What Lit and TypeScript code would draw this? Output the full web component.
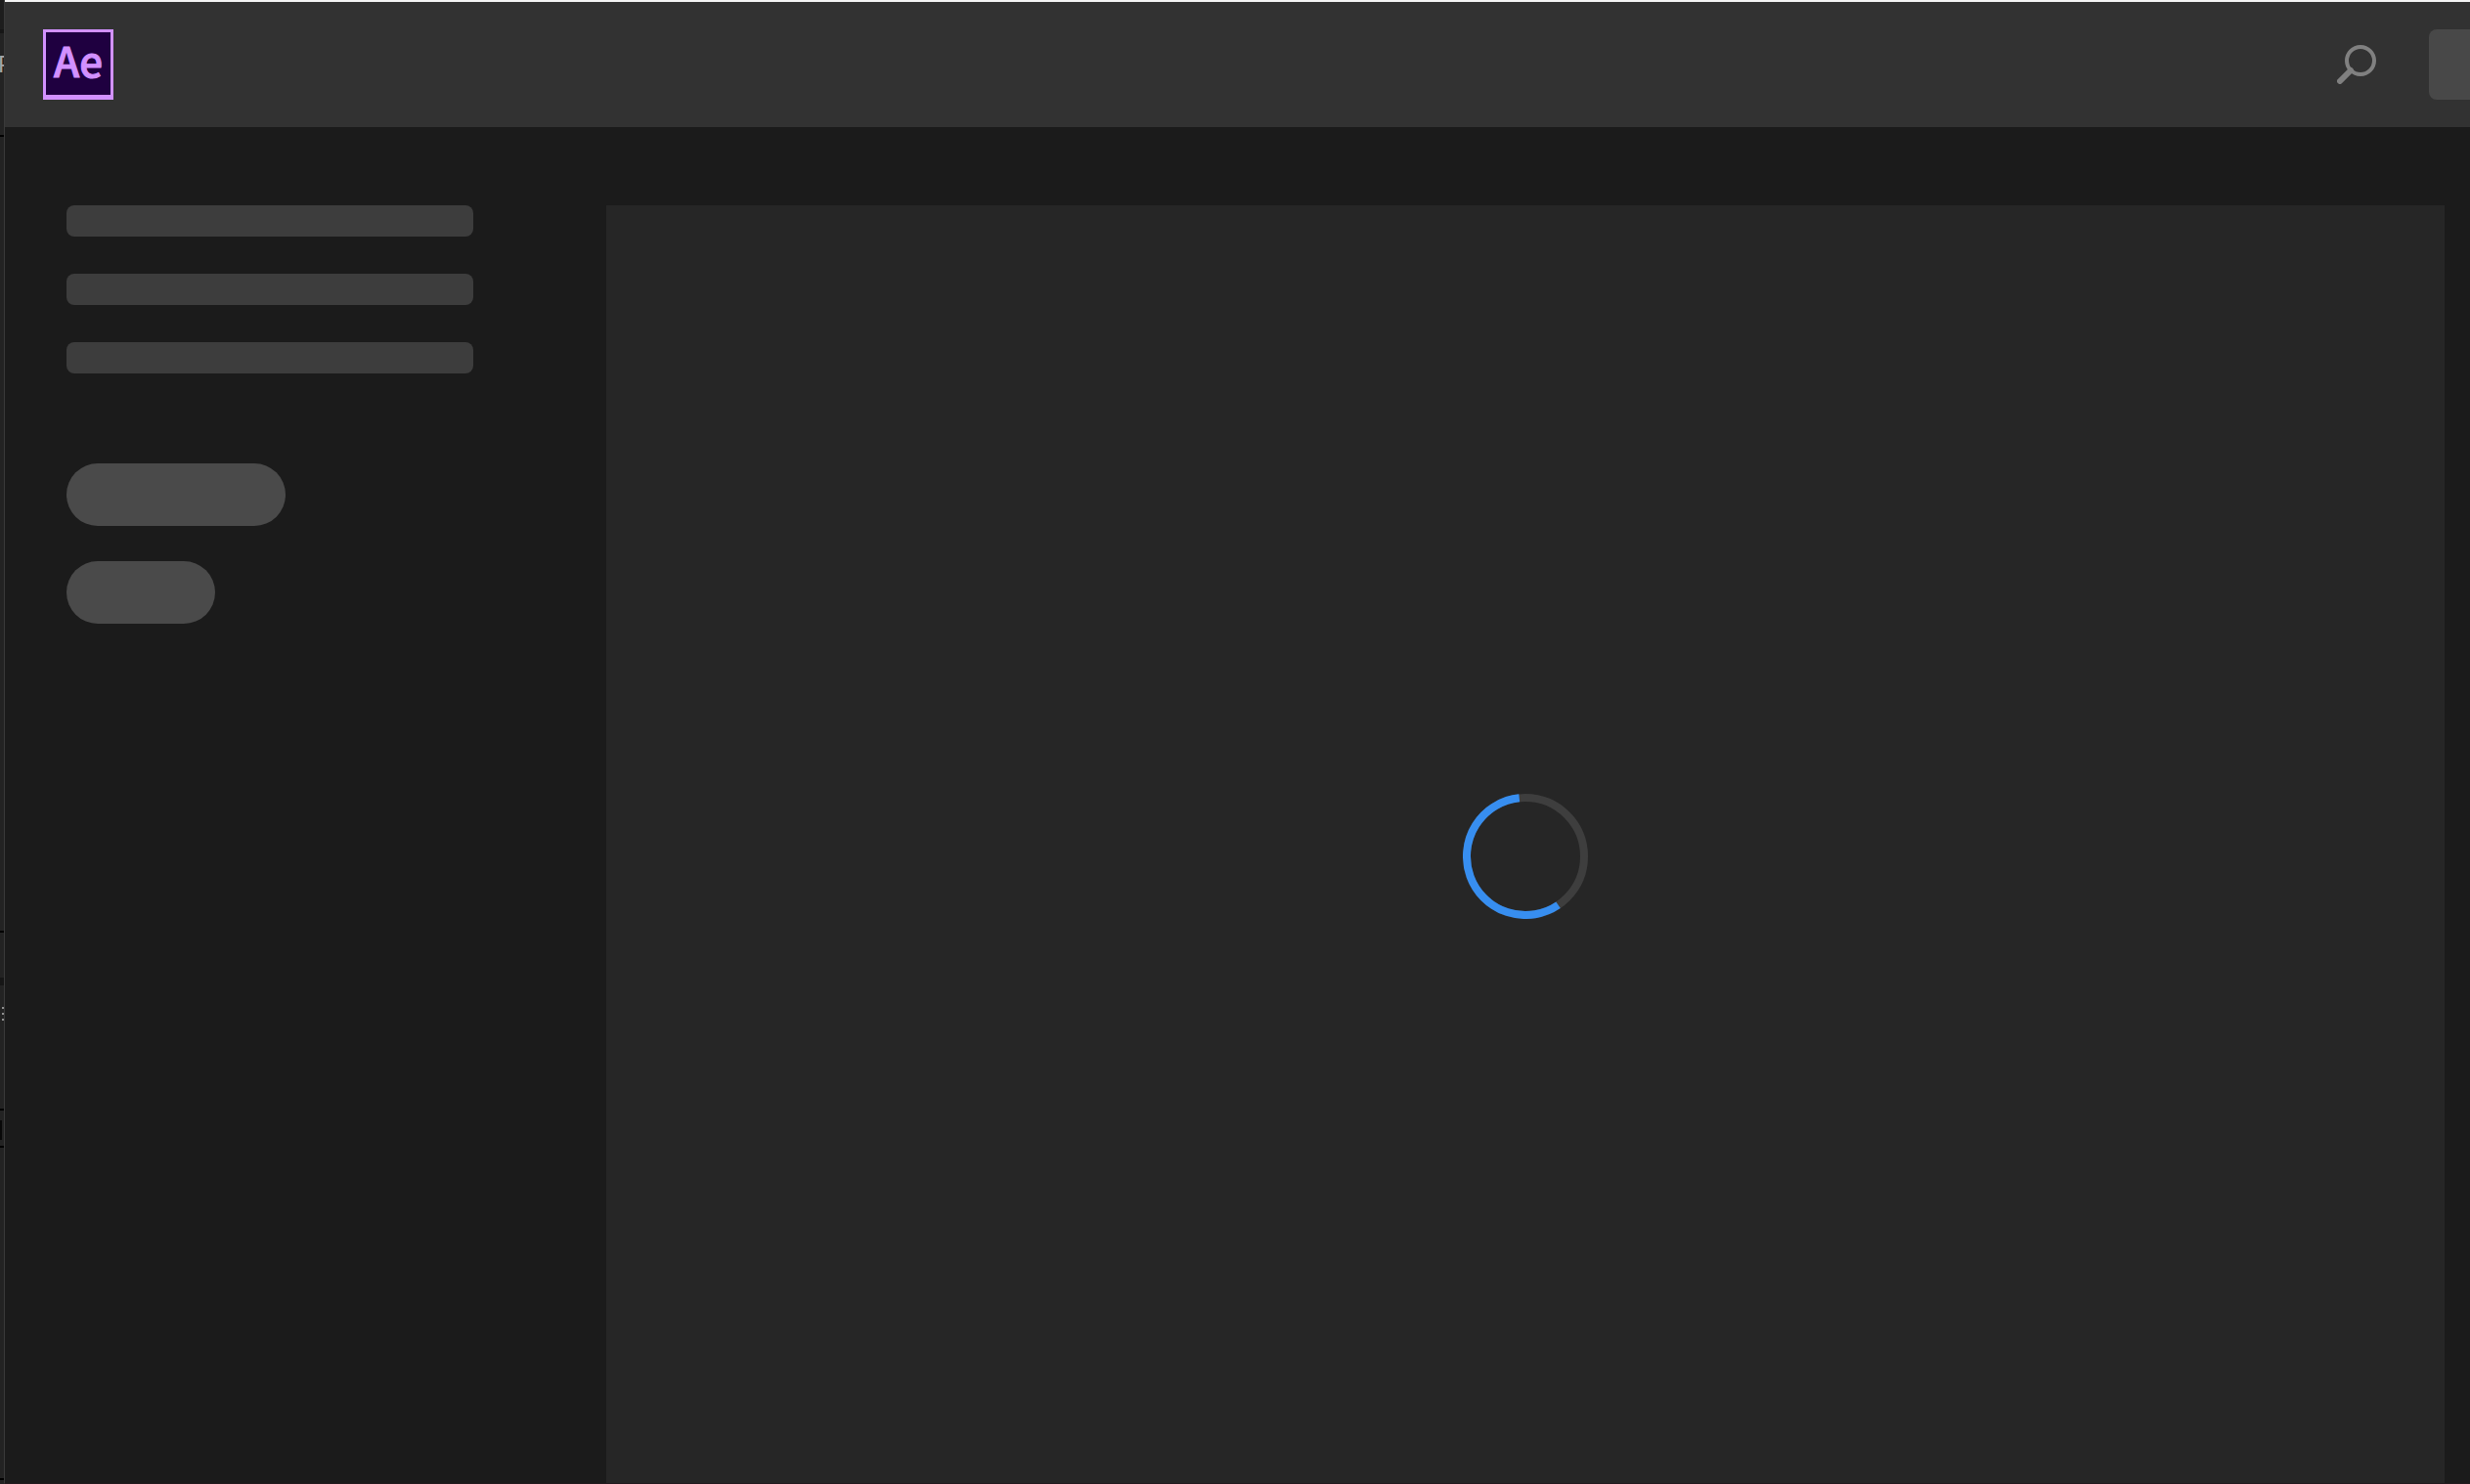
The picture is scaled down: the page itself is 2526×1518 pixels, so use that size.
import { LitElement, html, css, svg } from "lit";
import { customElement } from "lit/decorators.js";

/* Sliver of the editor window that shows beside the dialog. */
@customElement("backdrop-edge")
class BackdropEdge extends LitElement {
  static styles = css`
    :host {
      display: grid;
      grid-template-rows: 140px 814px 182px 1fr;
      width: 4px;
      height: 100%;
      overflow: hidden;
      background: #000;
      color: #a6a6a6;
      font: 24px/28px "Liberation Sans", sans-serif;
    }
    .block {
      overflow: hidden;
      border-bottom: 2px solid #000;
      background: #232323;
    }
    .block:last-child {
      border-bottom: 0;
    }
    .top {
      display: flex;
      flex-direction: column;
      background: #1d1d1d;
    }
    .tabs {
      flex: none;
      height: 30px;
      border-bottom: 4px solid #161616;
    }
    .label {
      flex: 1;
      padding-top: 18px;
      background: #232323;
      text-indent: -2px;
    }
    .tools {
      display: flex;
      flex-direction: column;
    }
    .band {
      height: 8px;
      margin-top: 46px;
      background: #161616;
    }
    .grip {
      display: grid;
      gap: 4px;
      justify-content: end;
      padding-top: 22px;
    }
    .dot {
      width: 2px;
      height: 2px;
      background: #909090;
    }
    .bottom {
      display: grid;
      grid-template-rows: 36px 300px 1fr;
    }
    .field {
      height: 20px;
      width: 2px;
      margin-top: 10px;
      background: #080808;
    }
    .line {
      border-top: 2px solid #000;
    }
    .foot {
      align-self: end;
      height: 4px;
      border-top: 2px solid #000;
    }
  `;
  render() {
    return html`
      <div class="block top">
        <div class="tabs"></div>
        <div class="label">P</div>
      </div>
      <div class="block"></div>
      <div class="block tools">
        <div class="band"></div>
        <div class="grip">
          <div class="dot"></div>
          <div class="dot"></div>
          <div class="dot"></div>
        </div>
      </div>
      <div class="block bottom">
        <div class="field"></div>
        <div class="line"></div>
        <div class="foot"></div>
      </div>
    `;
  }
}

@customElement("app-logo")
class AppLogo extends LitElement {
  static styles = css`
    :host {
      display: block;
      flex: none;
    }
    .logo {
      box-sizing: border-box;
      width: 72px;
      height: 72px;
      border: 3px solid #d291ff;
      border-bottom-width: 5px;
      background: #1f0040;
      color: #d291ff;
      font: 500 42px/56px "Noto Sans CJK SC", "Open Sans", sans-serif;
      -webkit-text-stroke: 1px #d291ff;
      text-align: center;
    }
  `;
  render() {
    return html`<div class="logo">Ae</div>`;
  }
}

@customElement("loading-ring")
class LoadingRing extends LitElement {
  static styles = css`
    :host {
      display: block;
      width: 128px;
      height: 128px;
    }
    .ring {
      display: block;
      fill: none;
      stroke-width: 8;
    }
    .track {
      stroke: #3e3e3e;
    }
    .progress {
      stroke: #378ef0;
    }
  `;
  render() {
    const point = (deg: number) => {
      const a = (deg * Math.PI) / 180;
      return `${(64 + 60 * Math.sin(a)).toFixed(2)} ${(64 - 60 * Math.cos(a)).toFixed(2)}`;
    };
    const arc = svg`<path class="progress" d="M${point(146)} A60 60 0 1 1 ${point(354)}" />`;
    return html`
      <svg class="ring" width="128" height="128" viewBox="0 0 128 128" role="img" aria-label="Loading">
        <circle class="track" cx="64" cy="64" r="60" />
        ${arc}
      </svg>
    `;
  }
}

@customElement("app-root")
class AppRoot extends LitElement {
  static styles = css`
    :host {
      display: grid;
      grid-template-columns: auto 1fr;
      height: 100vh;
      overflow: hidden;
      background: #1b1b1b;
    }
    .window {
      display: flex;
      flex-direction: column;
      min-width: 0;
      border-left: 1px solid #3a3a3a;
      border-bottom: 1px solid #231a1e;
    }
    .header {
      flex: none;
      display: flex;
      align-items: center;
      height: 128px;
      padding-left: 39px;
      border-top: 2px solid #f4f4f4;
      background: #323232;
    }
    .search {
      display: block;
      margin-left: auto;
      margin-right: 54px;
      padding: 0;
      border: 0;
      background: none;
    }
    .icon {
      display: block;
      fill: none;
      stroke: #808080;
    }
    .action {
      width: 42px;
      height: 72px;
      border-radius: 8px 0 0 8px;
      background: #484848;
    }
    .body {
      flex: 1;
      display: grid;
      grid-template-columns: 416px 1fr;
      column-gap: 136px;
      padding: 80px 26px 0 63px;
    }
    .lines {
      display: grid;
      gap: 38px;
    }
    .line {
      height: 32px;
      border-radius: 8px;
      background: #3d3d3d;
    }
    .pills {
      display: grid;
      gap: 36px;
      margin-top: 92px;
    }
    .pill {
      width: 224px;
      height: 64px;
      border-radius: 32px;
      background: #4a4a4a;
    }
    .short {
      width: 152px;
    }
    .panel {
      display: grid;
      place-items: center;
      padding-top: 24px;
      background: #262626;
    }
  `;
  render() {
    return html`
      <backdrop-edge></backdrop-edge>
      <div class="window">
        <header class="header">
          <app-logo></app-logo>
          <button class="search" type="button" aria-label="Search">
            <svg class="icon" width="40" height="40" viewBox="0 0 40 40">
              <circle cx="24" cy="16" r="14" stroke-width="4" />
              <path d="M14 26 L3 37" stroke-width="6" stroke-linecap="round" />
            </svg>
          </button>
          <div class="action"></div>
        </header>
        <main class="body">
          <aside>
            <div class="lines">
              <div class="line"></div>
              <div class="line"></div>
              <div class="line"></div>
            </div>
            <div class="pills">
              <div class="pill"></div>
              <div class="pill short"></div>
            </div>
          </aside>
          <section class="panel">
            <loading-ring></loading-ring>
          </section>
        </main>
      </div>
    `;
  }
}
